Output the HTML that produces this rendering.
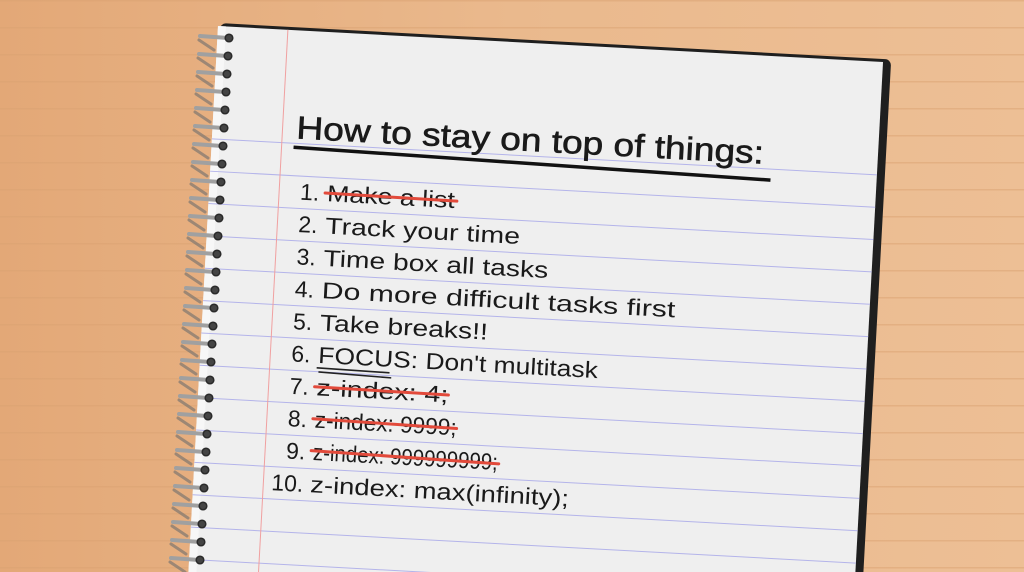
<!DOCTYPE html>
<html><head><meta charset="utf-8"><style>
html,body{margin:0;padding:0;width:1024px;height:572px;overflow:hidden;background:#e9b68a}
svg{display:block}
text{font-family:"Liberation Sans",sans-serif;fill:#1a1a1a}
</style></head><body>
<svg width="1024" height="572" viewBox="0 0 1024 572" xmlns="http://www.w3.org/2000/svg" style="overflow:hidden">
<defs>
<linearGradient id="bg" x1="0" y1="0" x2="1" y2="0">
<stop offset="0" stop-color="#e3a877"/><stop offset="0.5" stop-color="#eab98d"/><stop offset="1" stop-color="#edbf95"/>
</linearGradient>
<pattern id="wood" width="1024" height="27" patternUnits="userSpaceOnUse">
<rect width="1024" height="27" fill="url(#bg)"/>
<rect y="0" width="1024" height="1.5" fill="#d9a272" opacity="0.5"/>
</pattern>
<clipPath id="c"><rect width="1024" height="572"/></clipPath>
</defs>
<rect width="1024" height="572" fill="url(#wood)"/>
<g clip-path="url(#c)">
<g transform="translate(218,26) rotate(3.1)">
<rect x="2" y="-3" width="672" height="600" rx="6" fill="#1f1f1f"/>
<rect x="0" y="0" width="666" height="600" fill="#efefef"/>
<rect x="0" y="0" width="8" height="600" fill="#f7f7f7"/>
<g stroke="#b4b4ea" stroke-width="1">
<line x1="0" y1="113" x2="666" y2="113"/>
<line x1="0" y1="145.4" x2="666" y2="145.4"/>
<line x1="0" y1="177.8" x2="666" y2="177.8"/>
<line x1="0" y1="210.2" x2="666" y2="210.2"/>
<line x1="0" y1="242.6" x2="666" y2="242.6"/>
<line x1="0" y1="275" x2="666" y2="275"/>
<line x1="0" y1="307.4" x2="666" y2="307.4"/>
<line x1="0" y1="339.8" x2="666" y2="339.8"/>
<line x1="0" y1="372.2" x2="666" y2="372.2"/>
<line x1="0" y1="404.6" x2="666" y2="404.6"/>
<line x1="0" y1="437" x2="666" y2="437"/>
<line x1="0" y1="469.4" x2="666" y2="469.4"/>
<line x1="0" y1="501.8" x2="666" y2="501.8"/>
<line x1="0" y1="534.2" x2="666" y2="534.2"/>
<line x1="0" y1="566.6" x2="666" y2="566.6"/>
</g>
<line x1="70" y1="0" x2="70" y2="600" stroke="#f0a0a0" stroke-width="1"/>
<text x="84" y="108" font-size="32" textLength="468" lengthAdjust="spacingAndGlyphs" stroke="#1a1a1a" stroke-width="0.6">How to stay on top of things:</text>
<path d="M82 117 L560 124" stroke="#111" stroke-width="3.5" fill="none"/>
<g font-size="23">
<text x="91" y="169">1.</text><text x="118" y="169" textLength="128" lengthAdjust="spacingAndGlyphs">Make a list</text>
<text x="91" y="201.4">2.</text><text x="118" y="201.4" textLength="195" lengthAdjust="spacingAndGlyphs">Track your time</text>
<text x="91" y="233.8">3.</text><text x="118" y="233.8" textLength="225" lengthAdjust="spacingAndGlyphs">Time box all tasks</text>
<text x="91" y="266.2">4.</text><text x="118" y="266.2" textLength="354" lengthAdjust="spacingAndGlyphs">Do more difficult tasks first</text>
<text x="91" y="298.6">5.</text><text x="118" y="298.6" textLength="168" lengthAdjust="spacingAndGlyphs">Take breaks!!</text>
<text x="91" y="331">6.</text><text x="118" y="331" textLength="280" lengthAdjust="spacingAndGlyphs">FOCUS: Don't multitask</text>
<text x="91" y="363.4">7.</text><text x="118" y="363.4" textLength="132" lengthAdjust="spacingAndGlyphs">z-index: 4;</text>
<text x="91" y="395.8">8.</text><text x="118" y="395.8" textLength="142" lengthAdjust="spacingAndGlyphs">z-index: 9999;</text>
<text x="91" y="428.2">9.</text><text x="118" y="428.2" textLength="185" lengthAdjust="spacingAndGlyphs">z-index: 999999999;</text>
<text x="78" y="460.6">10.</text><text x="117" y="460.6" textLength="259" lengthAdjust="spacingAndGlyphs">z-index: max(infinity);</text>
</g>
<g stroke="#e24a3b" stroke-width="3" stroke-linecap="round">
<line x1="116" y1="161" x2="248" y2="162"/>
<line x1="116" y1="355" x2="250" y2="356"/>
<line x1="116" y1="387" x2="260" y2="389"/>
<line x1="116" y1="419" x2="304" y2="422"/>
</g>
<path d="M117 336 L190 337 M119 340 L192 342" stroke="#222" stroke-width="1.6" fill="none"/>
</g>
<g>
<g stroke="#6e6e6e" stroke-width="3" stroke-linecap="round" opacity="0.6">
<line x1="199" y1="40" x2="214" y2="50"/><line x1="198" y1="58" x2="213" y2="68"/><line x1="197" y1="76" x2="212" y2="86"/><line x1="196" y1="94" x2="211" y2="104"/><line x1="195" y1="112" x2="210" y2="122"/><line x1="194" y1="130" x2="209" y2="140"/><line x1="193" y1="148" x2="208" y2="158"/><line x1="192" y1="166" x2="207" y2="176"/><line x1="191" y1="184" x2="206" y2="194"/><line x1="190" y1="202" x2="205" y2="212"/><line x1="189" y1="220" x2="204" y2="230"/><line x1="188" y1="238" x2="203" y2="248"/><line x1="187" y1="256" x2="202" y2="266"/><line x1="186" y1="274" x2="201" y2="284"/><line x1="185" y1="292" x2="200" y2="302"/><line x1="184" y1="310" x2="199" y2="320"/><line x1="183" y1="328" x2="198" y2="338"/><line x1="182" y1="346" x2="197" y2="356"/><line x1="181" y1="364" x2="196" y2="374"/><line x1="180" y1="382" x2="195" y2="392"/><line x1="179" y1="400" x2="194" y2="410"/><line x1="178" y1="418" x2="193" y2="428"/><line x1="177" y1="436" x2="192" y2="446"/><line x1="176" y1="454" x2="191" y2="464"/><line x1="175" y1="472" x2="190" y2="482"/><line x1="174" y1="490" x2="189" y2="500"/><line x1="173" y1="508" x2="188" y2="518"/><line x1="172" y1="526" x2="187" y2="536"/><line x1="171" y1="544" x2="186" y2="554"/><line x1="170" y1="562" x2="185" y2="572"/>
</g>
<g stroke="#a0a0a0" stroke-width="4" stroke-linecap="round">
<line x1="200" y1="36" x2="228" y2="38"/><line x1="199" y1="54" x2="227" y2="56"/><line x1="198" y1="72" x2="226" y2="74"/><line x1="197" y1="90" x2="225" y2="92"/><line x1="196" y1="108" x2="224" y2="110"/><line x1="195" y1="126" x2="223" y2="128"/><line x1="194" y1="144" x2="222" y2="146"/><line x1="193" y1="162" x2="221" y2="164"/><line x1="192" y1="180" x2="220" y2="182"/><line x1="191" y1="198" x2="219" y2="200"/><line x1="190" y1="216" x2="218" y2="218"/><line x1="189" y1="234" x2="217" y2="236"/><line x1="188" y1="252" x2="216" y2="254"/><line x1="187" y1="270" x2="215" y2="272"/><line x1="186" y1="288" x2="214" y2="290"/><line x1="185" y1="306" x2="213" y2="308"/><line x1="184" y1="324" x2="212" y2="326"/><line x1="183" y1="342" x2="211" y2="344"/><line x1="182" y1="360" x2="210" y2="362"/><line x1="181" y1="378" x2="209" y2="380"/><line x1="180" y1="396" x2="208" y2="398"/><line x1="179" y1="414" x2="207" y2="416"/><line x1="178" y1="432" x2="206" y2="434"/><line x1="177" y1="450" x2="205" y2="452"/><line x1="176" y1="468" x2="204" y2="470"/><line x1="175" y1="486" x2="203" y2="488"/><line x1="174" y1="504" x2="202" y2="506"/><line x1="173" y1="522" x2="201" y2="524"/><line x1="172" y1="540" x2="200" y2="542"/><line x1="171" y1="558" x2="199" y2="560"/>
</g>
<g fill="#444" stroke="#2a2a2a" stroke-width="1.5">
<circle cx="229" cy="38" r="3.8"/><circle cx="228" cy="56" r="3.8"/><circle cx="227" cy="74" r="3.8"/><circle cx="226" cy="92" r="3.8"/><circle cx="225" cy="110" r="3.8"/><circle cx="224" cy="128" r="3.8"/><circle cx="223" cy="146" r="3.8"/><circle cx="222" cy="164" r="3.8"/><circle cx="221" cy="182" r="3.8"/><circle cx="220" cy="200" r="3.8"/><circle cx="219" cy="218" r="3.8"/><circle cx="218" cy="236" r="3.8"/><circle cx="217" cy="254" r="3.8"/><circle cx="216" cy="272" r="3.8"/><circle cx="215" cy="290" r="3.8"/><circle cx="214" cy="308" r="3.8"/><circle cx="213" cy="326" r="3.8"/><circle cx="212" cy="344" r="3.8"/><circle cx="211" cy="362" r="3.8"/><circle cx="210" cy="380" r="3.8"/><circle cx="209" cy="398" r="3.8"/><circle cx="208" cy="416" r="3.8"/><circle cx="207" cy="434" r="3.8"/><circle cx="206" cy="452" r="3.8"/><circle cx="205" cy="470" r="3.8"/><circle cx="204" cy="488" r="3.8"/><circle cx="203" cy="506" r="3.8"/><circle cx="202" cy="524" r="3.8"/><circle cx="201" cy="542" r="3.8"/><circle cx="200" cy="560" r="3.8"/>
</g>
</g>
</g>
</svg>
</body></html>
